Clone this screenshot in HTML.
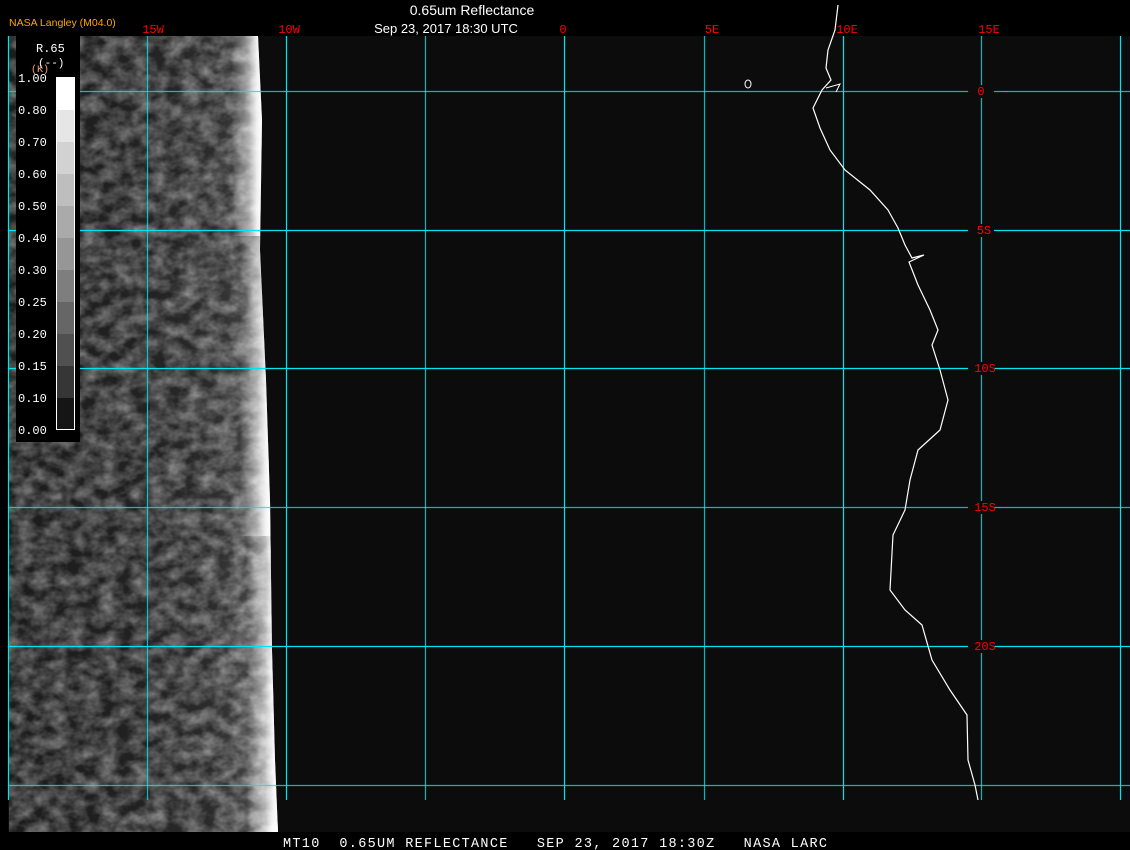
<!DOCTYPE html>
<html><head><meta charset="utf-8"><style>
html,body{margin:0;padding:0;background:#000;width:1130px;height:850px;overflow:hidden}
svg{display:block}
text{font-family:"Liberation Mono","DejaVu Sans Mono",monospace}
</style></head><body>
<svg width="1130" height="850" viewBox="0 0 1130 850" xmlns="http://www.w3.org/2000/svg">
<defs>
<linearGradient id="g" x1="0" x2="1" y1="0" y2="0">
<stop offset="0" stop-color="#2e2e2e"/>
<stop offset="0.5" stop-color="#383838"/>
<stop offset="0.75" stop-color="#484848"/>
<stop offset="0.88" stop-color="#6a6a6a"/>
<stop offset="0.95" stop-color="#a8a8a8"/>
<stop offset="0.985" stop-color="#f4f4f4"/>
<stop offset="1" stop-color="#fff"/>
</linearGradient>
<linearGradient id="e" x1="0" x2="1" y1="0" y2="0">
<stop offset="0.88" stop-color="#fff" stop-opacity="0"/>
<stop offset="0.95" stop-color="#fff" stop-opacity="0.5"/>
<stop offset="0.98" stop-color="#fff" stop-opacity="0.9"/>
<stop offset="1" stop-color="#fff" stop-opacity="1"/>
</linearGradient>
<filter id="n" x="0" y="0" width="1" height="1" color-interpolation-filters="sRGB">
<feTurbulence type="fractalNoise" baseFrequency="0.06 0.08" numOctaves="3" seed="4"/>
<feColorMatrix type="matrix" values="1.6 0 0 0 -0.45  1.6 0 0 0 -0.45  1.6 0 0 0 -0.45  0 0 0 0 1"/>
</filter>
<clipPath id="c"><path d="M9 36 L258 36 L262 120 L260 250 L266 380 L270 500 L272 650 L275 760 L278 832 L9 832 Z"/></clipPath>
</defs>
<rect x="0" y="0" width="1130" height="850" fill="#000"/>
<rect x="8" y="36" width="1122" height="796" fill="#0c0c0c"/>
<g clip-path="url(#c)">
<rect x="9" y="36" width="270" height="796" filter="url(#n)"/>
<rect x="9" y="36" width="270" height="796" fill="url(#g)" opacity="0.6"/>
<path d="M9 36 L258 36 L262 120 L260 250 L266 380 L270 500 L272 650 L275 760 L278 832 L9 832 Z" fill="none"/>
<rect x="9" y="36" width="253" height="200" fill="url(#e)"/>
<rect x="9" y="236" width="262" height="300" fill="url(#e)"/>
<rect x="9" y="536" width="270" height="296" fill="url(#e)"/>
</g>
<!-- grid -->
<g stroke="#00e5f0" stroke-width="1.2">
<line x1="8.5" y1="36" x2="8.5" y2="800"/>
<line x1="147.5" y1="36" x2="147.5" y2="800" stroke-opacity=".8"/>
<line x1="286.5" y1="36" x2="286.5" y2="800"/>
<line x1="425.5" y1="36" x2="425.5" y2="800" stroke-opacity=".8"/>
<line x1="564.5" y1="36" x2="564.5" y2="800"/>
<line x1="704.5" y1="36" x2="704.5" y2="800" stroke-opacity=".8"/>
<line x1="843.5" y1="36" x2="843.5" y2="800"/>
<line x1="981.5" y1="36" x2="981.5" y2="800" stroke-opacity=".8"/>
<line x1="1120.5" y1="36" x2="1120.5" y2="800"/>
<line x1="8" y1="91.5" x2="1130" y2="91.5" stroke-opacity=".8"/>
<line x1="8" y1="230.5" x2="1130" y2="230.5"/>
<line x1="8" y1="368.5" x2="1130" y2="368.5"/>
<line x1="8" y1="507.5" x2="1130" y2="507.5" stroke-opacity=".8"/>
<line x1="8" y1="646.5" x2="1130" y2="646.5"/>
<line x1="8" y1="785.5" x2="1130" y2="785.5" stroke-opacity=".8"/>
</g>
<!-- coastline -->
<polyline fill="none" stroke="#fff" stroke-width="1.2" points="838,5 835,30 828,50 826,68 831,80 822,90 813,108 820,128 830,150 845,170 870,190 888,210 898,228 905,245 912,258 924,255 909,262 918,285 930,310 938,330 932,345 940,370 948,400 940,430 918,450 910,480 905,510 893,535 890,590 905,610 922,625 932,660 950,690 967,715 968,760 975,785 978,800"/>
<polyline fill="none" stroke="#fff" stroke-width="1" points="826,88 840,84 836,92"/>
<ellipse cx="748" cy="84" rx="3" ry="4" fill="none" stroke="#fff" stroke-width="1"/>
<!-- labels -->
<g fill="#f00" font-size="12" text-anchor="middle">
<rect x="968" y="85" width="26" height="13" fill="#0c0c0c"/><text x="981" y="95">0</text>
<rect x="968" y="224" width="26" height="13" fill="#0c0c0c"/><text x="984" y="234">5S</text>
<rect x="968" y="362" width="26" height="13" fill="#0c0c0c"/><text x="985" y="372">10S</text>
<rect x="968" y="501" width="26" height="13" fill="#0c0c0c"/><text x="985" y="511">15S</text>
<rect x="968" y="640" width="26" height="13" fill="#0c0c0c"/><text x="985" y="650">20S</text>
<text x="153" y="33">15W</text>
<text x="289" y="33">10W</text>
<text x="563" y="33">0</text>
<text x="712" y="33">5E</text>
<text x="847" y="33">10E</text>
<text x="989" y="33">15E</text>
</g>
<!-- legend -->
<rect x="16" y="36" width="64" height="406" fill="#000"/>
<g fill="#fff" font-size="12">
<text x="36" y="52">R.65</text>
<text x="38" y="66" font-size="11">(--)</text>
<text x="31" y="72" font-size="10" fill="#f4a080">(K)</text>
</g>
<g>
<rect x="56" y="77" width="19" height="33" fill="#fff"/>
<rect x="56" y="110" width="19" height="32" fill="#e6e6e6"/>
<rect x="56" y="142" width="19" height="32" fill="#d2d2d2"/>
<rect x="56" y="174" width="19" height="32" fill="#bebebe"/>
<rect x="56" y="206" width="19" height="32" fill="#aaa"/>
<rect x="56" y="238" width="19" height="32" fill="#969696"/>
<rect x="56" y="270" width="19" height="32" fill="#7e7e7e"/>
<rect x="56" y="302" width="19" height="32" fill="#666"/>
<rect x="56" y="334" width="19" height="32" fill="#505050"/>
<rect x="56" y="366" width="19" height="32" fill="#363636"/>
<rect x="56" y="398" width="19" height="32" fill="#151515"/>
<rect x="56.5" y="77.5" width="18" height="352" fill="none" stroke="#fff"/>
</g>
<g fill="#fff" font-size="12">
<text x="18" y="82">1.00</text>
<text x="18" y="114">0.80</text>
<text x="18" y="146">0.70</text>
<text x="18" y="178">0.60</text>
<text x="18" y="210">0.50</text>
<text x="18" y="242">0.40</text>
<text x="18" y="274">0.30</text>
<text x="18" y="306">0.25</text>
<text x="18" y="338">0.20</text>
<text x="18" y="370">0.15</text>
<text x="18" y="402">0.10</text>
<text x="18" y="434">0.00</text>
</g>
<!-- titles -->
<text x="472" y="15" fill="#fff" font-size="14" text-anchor="middle" style="font-family:'Liberation Sans',sans-serif">0.65um Reflectance</text>
<text x="446" y="33" fill="#fff" font-size="13" text-anchor="middle" style="font-family:'Liberation Sans',sans-serif">Sep 23, 2017 18:30 UTC</text>
<text x="9" y="26" fill="#ffa500" font-size="10.5" style="font-family:'Liberation Sans',sans-serif">NASA Langley (M04.0)</text>
<text x="283" y="847" fill="#fff" font-size="13.5" textLength="544" lengthAdjust="spacing" xml:space="preserve">MT10  0.65UM REFLECTANCE   SEP 23, 2017 18:30Z   NASA LARC</text>
</svg>
</body></html>
